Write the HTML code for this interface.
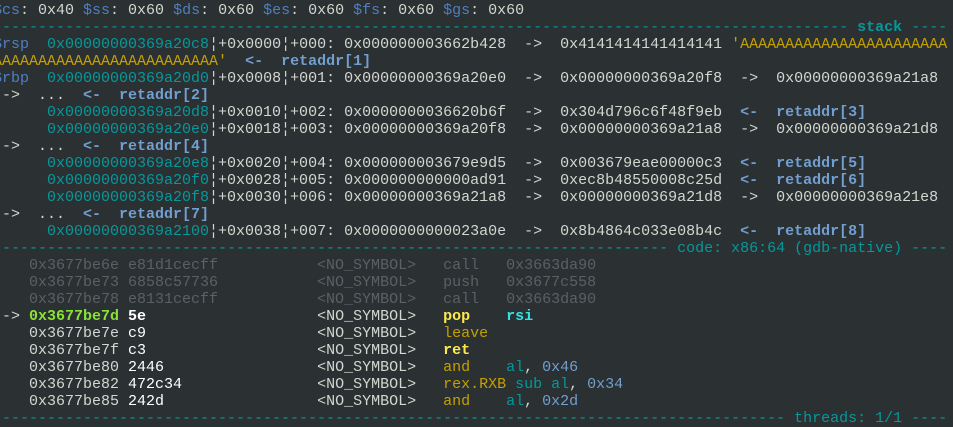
<!DOCTYPE html>
<html><head><meta charset="utf-8"><style>
html,body{margin:0;padding:0;background:#2b3033;width:953px;height:420px;overflow:hidden}
pre{margin:0;position:absolute;left:-7px;top:2px;font-family:"Liberation Mono","DejaVu Sans Mono",monospace;font-size:15px;line-height:17px;color:#d3d7cf;white-space:pre}
.b{color:#4f7fbf}.t{color:#06989a}.y{color:#c4a000}.r{color:#729fcf;font-weight:bold}.ar{color:#729fcf;font-weight:bold}
.d{color:#5c6064}.g{color:#8ae234;font-weight:bold}.Y{color:#fce94f;font-weight:bold}.C{color:#34e2e2;font-weight:bold}
.w{color:#fff}.W{color:#fff;font-weight:bold}.tb{color:#06989a;font-weight:bold}.n{color:#729fcf}
</style></head><body><pre><span class="b">$cs</span>: 0x40 <span class="b">$ss</span>: 0x60 <span class="b">$ds</span>: 0x60 <span class="b">$es</span>: 0x60 <span class="b">$fs</span>: 0x60 <span class="b">$gs</span>: 0x60
<span class="t">-----------------------------------------------------------------------------------------------</span> <span class="tb">stack</span> <span class="t">----</span>
<span class="b">$rsp</span>  <span class="t">0x00000000369a20c8</span>¦+0x0000¦+000: 0x000000003662b428  ->  0x4141414141414141 <span class="y">'AAAAAAAAAAAAAAAAAAAAAAA</span>
<span class="y">AAAAAAAAAAAAAAAAAAAAAAAAA'</span>  <span class="ar">&lt;-</span>  <span class="r">retaddr[1]</span>
<span class="b">$rbp</span>  <span class="t">0x00000000369a20d0</span>¦+0x0008¦+001: 0x00000000369a20e0  ->  0x00000000369a20f8  ->  0x00000000369a21a8
 ->  ...  <span class="ar">&lt;-</span>  <span class="r">retaddr[2]</span>
      <span class="t">0x00000000369a20d8</span>¦+0x0010¦+002: 0x0000000036620b6f  ->  0x304d796c6f48f9eb  <span class="ar">&lt;-</span>  <span class="r">retaddr[3]</span>
      <span class="t">0x00000000369a20e0</span>¦+0x0018¦+003: 0x00000000369a20f8  ->  0x00000000369a21a8  ->  0x00000000369a21d8
 ->  ...  <span class="ar">&lt;-</span>  <span class="r">retaddr[4]</span>
      <span class="t">0x00000000369a20e8</span>¦+0x0020¦+004: 0x000000003679e9d5  ->  0x003679eae00000c3  <span class="ar">&lt;-</span>  <span class="r">retaddr[5]</span>
      <span class="t">0x00000000369a20f0</span>¦+0x0028¦+005: 0x000000000000ad91  ->  0xec8b48550008c25d  <span class="ar">&lt;-</span>  <span class="r">retaddr[6]</span>
      <span class="t">0x00000000369a20f8</span>¦+0x0030¦+006: 0x00000000369a21a8  ->  0x00000000369a21d8  ->  0x00000000369a21e8
 ->  ...  <span class="ar">&lt;-</span>  <span class="r">retaddr[7]</span>
      <span class="t">0x00000000369a2100</span>¦+0x0038¦+007: 0x0000000000023a0e  ->  0x8b4864c033e08b4c  <span class="ar">&lt;-</span>  <span class="r">retaddr[8]</span>
<span class="t">--------------------------------------------------------------------------- code: x86:64 (gdb-native) ----</span>
<span class="d">    0x3677be6e e81d1cecff           &lt;NO_SYMBOL&gt;   call   0x3663da90</span>
<span class="d">    0x3677be73 6858c57736           &lt;NO_SYMBOL&gt;   push   0x3677c558</span>
<span class="d">    0x3677be78 e8131cecff           &lt;NO_SYMBOL&gt;   call   0x3663da90</span>
 -> <span class="g">0x3677be7d</span> <span class="W">5e</span>                   &lt;NO_SYMBOL&gt;   <span class="Y">pop</span>    <span class="C">rsi</span>
    0x3677be7e <span class="w">c9</span>                   &lt;NO_SYMBOL&gt;   <span class="y">leave</span>
    0x3677be7f <span class="w">c3</span>                   &lt;NO_SYMBOL&gt;   <span class="Y">ret</span>
    0x3677be80 <span class="w">2446</span>                 &lt;NO_SYMBOL&gt;   <span class="y">and</span>    <span class="t">al</span>, <span class="n">0x46</span>
    0x3677be82 <span class="w">472c34</span>               &lt;NO_SYMBOL&gt;   <span class="y">rex.RXB</span> <span class="t">sub al</span>, <span class="n">0x34</span>
    0x3677be85 <span class="w">242d</span>                 &lt;NO_SYMBOL&gt;   <span class="y">and</span>    <span class="t">al</span>, <span class="n">0x2d</span>
<span class="t">---------------------------------------------------------------------------------------- threads: 1/1 ----</span>
</pre></body></html>
